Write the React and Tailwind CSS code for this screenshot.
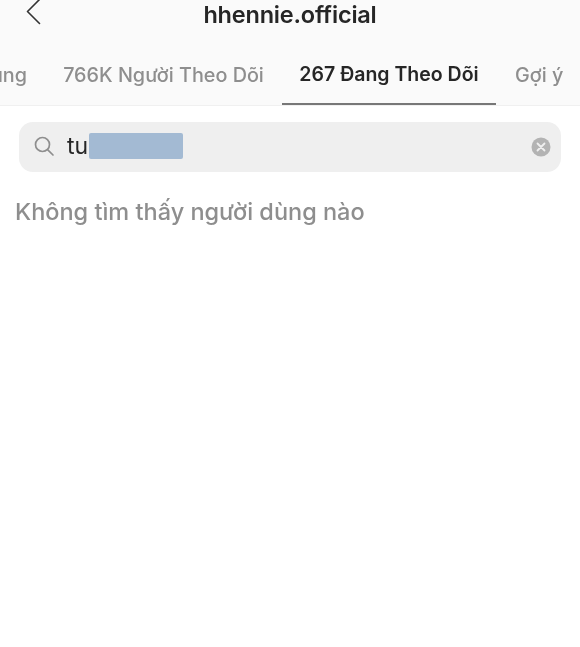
export default function App() {
  return (
    <div className="w-[580px] h-[647px] overflow-hidden bg-white font-['Inter','Liberation_Sans',sans-serif] blur-[0.4px]">
      <div className="bg-[#fafafa] border-b border-[#f0f0f0]">
        <header className="relative h-[29px] flex items-center justify-center">
          <svg className="absolute left-[25px] top-[-2px]" width="18" height="28" viewBox="0 0 18 28" fill="none" stroke="#333" strokeWidth="1.6" strokeLinecap="round" strokeLinejoin="round">
            <path d="M14.5 1.5 L2.5 13.5 L14.5 25.5" />
          </svg>
          <h1 className="text-[23.5px] leading-[29px] font-semibold text-[#262626] tracking-[-0.2px]">hhennie.official</h1>
        </header>
        <nav className="flex h-[76px] text-[19.8px] font-medium">
          <div className="w-[45px] pr-[18px] flex justify-end items-center overflow-hidden text-[#8e8e8e] pt-[17px]"><span>Chung</span></div>
          <div className="w-[237px] flex justify-center items-center text-[#8e8e8e] pt-[17px]"><span className="whitespace-nowrap">766K Người Theo Dõi</span></div>
          <div className="w-[214px] flex justify-center items-center text-[19.5px] text-[#262626] font-semibold border-b-2 border-[#777] pt-[17px]"><span className="whitespace-nowrap">267 Đang Theo Dõi</span></div>
          <div className="flex-1 pl-[19px] flex items-center text-[#8e8e8e] pt-[17px]"><span className="whitespace-nowrap">Gợi ý</span></div>
        </nav>
      </div>
      <div className="px-[19px] pt-[16px]">
        <div className="h-[50px] rounded-[14px] bg-[#efefef] flex items-center pl-[14px] pr-[10px]">
          <svg className="mb-[2px]" width="22" height="22" viewBox="0 0 22 22" fill="none" stroke="#8e8e8e" strokeWidth="1.7" strokeLinecap="round">
            <circle cx="9.5" cy="9.5" r="7" />
            <path d="M14.8 14.8 L20 20" />
          </svg>
          <span className="ml-[12px] mb-[2px] text-[23px] text-[#262626]">tu</span>
          <div className="ml-px mb-[2px] w-[94px] h-[26px] rounded-[2px] bg-[#a3bad3]" />
          <svg className="ml-auto" width="20" height="20" viewBox="0 0 20 20" fill="none">
            <circle cx="10" cy="10" r="9.5" fill="#b3b3b3" />
            <path d="M6.5 6.5 L13.5 13.5 M13.5 6.5 L6.5 13.5" stroke="#efefef" strokeWidth="1.8" strokeLinecap="round" />
          </svg>
        </div>
      </div>
      <p className="mt-[26px] pl-[15px] text-[23.5px] leading-[28px] font-medium text-[#8e8e8e]">Không tìm thấy người dùng nào</p>
    </div>
  );
}
